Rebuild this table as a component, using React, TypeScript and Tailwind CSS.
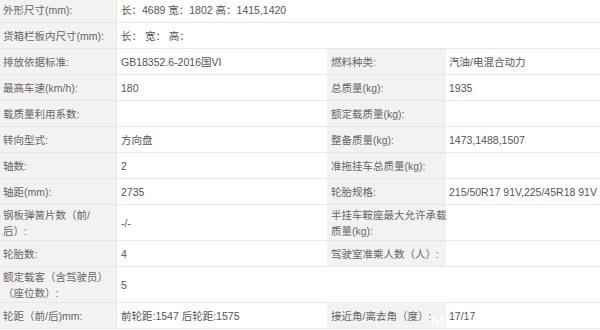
import React from "react";

type Row = {
  l1: React.ReactNode;
  v1: string;
  l2?: React.ReactNode;
  v2?: string;
  tall?: boolean;
  span?: boolean;
};

const rows: Row[] = [
  { l1: "外形尺寸(mm):", v1: "长：4689 宽：1802 高：1415,1420", span: true },
  { l1: "货箱栏板内尺寸(mm):", v1: "长：  宽：  高：", span: true },
  { l1: "排放依据标准:", v1: "GB18352.6-2016国VI", l2: "燃料种类:", v2: "汽油/电混合动力" },
  { l1: "最高车速(km/h):", v1: "180", l2: "总质量(kg):", v2: "1935" },
  { l1: "载质量利用系数:", v1: "", l2: "额定载质量(kg):", v2: "" },
  { l1: "转向型式:", v1: "方向盘", l2: "整备质量(kg):", v2: "1473,1488,1507" },
  { l1: "轴数:", v1: "2", l2: "准拖挂车总质量(kg):", v2: "" },
  { l1: "轴距(mm):", v1: "2735", l2: "轮胎规格:", v2: "215/50R17 91V,225/45R18 91V" },
  {
    l1: (
      <>
        钢板弹簧片数（前/
        <br />
        后）:
      </>
    ),
    v1: "-/-",
    l2: (
      <>
        半挂车鞍座最大允许承载
        <br />
        质量(kg):
      </>
    ),
    v2: "",
    tall: true,
  },
  { l1: "轮胎数:", v1: "4", l2: "驾驶室准乘人数（人）:", v2: "" },
  {
    l1: (
      <>
        额定载客（含驾驶员）
        <br />
        （座位数）:
      </>
    ),
    v1: "5",
    span: true,
    tall: true,
  },
  { l1: "轮距（前/后)mm:", v1: "前轮距:1547 后轮距:1575", l2: "接近角/离去角（度）:", v2: "17/17" },
];

export default function App() {
  return (
    <div
      className="relative w-[600px] h-[330px] overflow-hidden bg-white"
      style={{ fontFamily: '"Liberation Sans", "Noto Sans CJK SC", sans-serif' }}
    >
      <div className="-mt-[3px]">
        {rows.map((r, i) => (
          <div
            key={i}
            className={`flex border-b border-[#e8e8e8] text-[10.5px] leading-[16px] whitespace-nowrap ${
              r.tall ? "h-[36px]" : "h-[26px]"
            }`}
          >
            <div className="w-[117px] shrink-0 bg-[#f2f2f2] border-r border-[#e6e6e6] pl-[3px] flex items-center text-[#666]">
              <span>{r.l1}</span>
            </div>
            {r.span ? (
              <div className="flex-1 pl-[4px] flex items-center text-[#555]">{r.v1}</div>
            ) : (
              <>
                <div className="w-[210px] shrink-0 pl-[4px] flex items-center text-[#555]">{r.v1}</div>
                <div className="w-[119px] shrink-0 bg-[#f2f2f2] pl-[4px] flex items-center text-[#666]">
                  <span>{r.l2}</span>
                </div>
                <div className="flex-1 pl-[3px] flex items-center text-[#555]">{r.v2}</div>
              </>
            )}
          </div>
        ))}
      </div>
      <div
        className="absolute left-[431px] top-[314px] text-[15px] leading-[16px] font-bold text-white opacity-90"
        style={{ fontFamily: '"Liberation Serif", serif' }}
      >
        M
      </div>
    </div>
  );
}
